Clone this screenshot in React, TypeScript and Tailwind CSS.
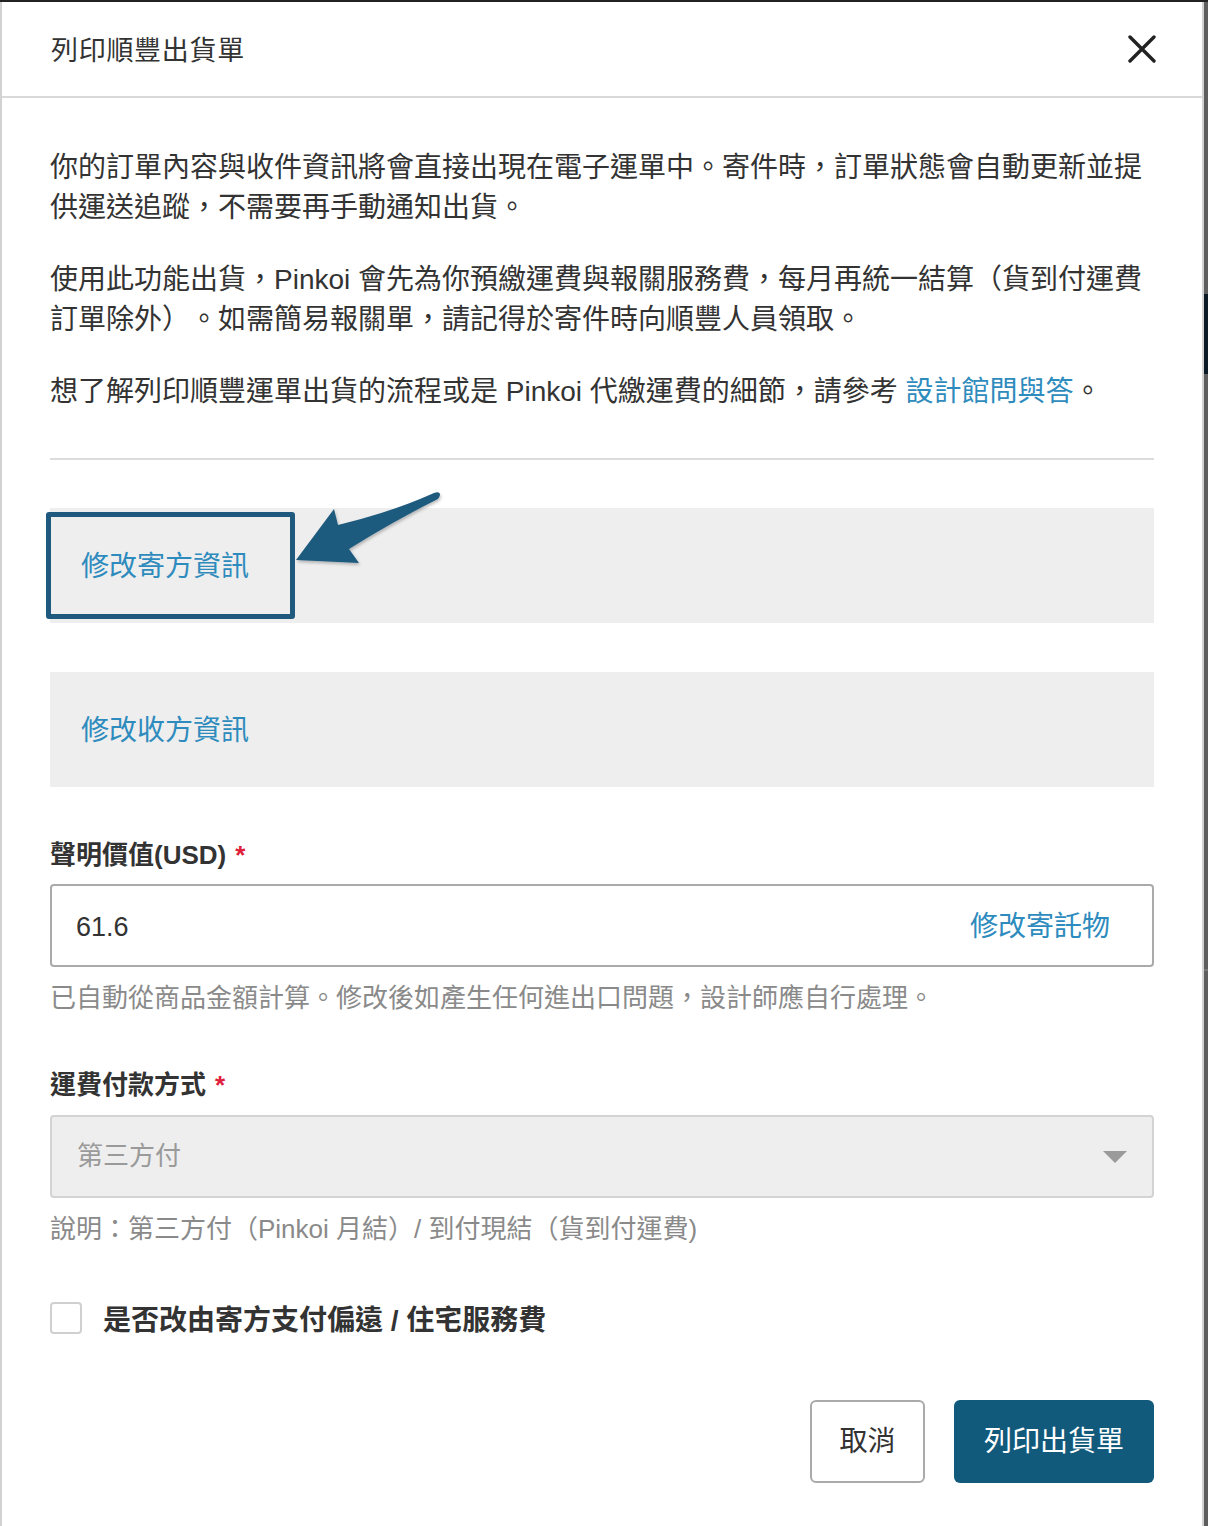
import React from "react";

const FONT = '"Liberation Sans", "Noto Sans CJK TC", sans-serif';

function CloseIcon() {
  return (
    <svg width="28" height="28" viewBox="0 0 28 28" fill="none">
      <path d="M2 2 L26 26 M26 2 L2 26" stroke="#222" strokeWidth="3.4" strokeLinecap="round" />
    </svg>
  );
}

function Arrow() {
  return (
    <svg
      className="absolute pointer-events-none"
      style={{ left: 0, top: 0 }}
      width="1208"
      height="700"
      viewBox="0 0 1208 700"
    >
      <defs>
        <filter id="sh" x="-20%" y="-20%" width="140%" height="140%">
          <feDropShadow dx="1" dy="2" stdDeviation="1.5" floodColor="#000" floodOpacity="0.25" />
        </filter>
      </defs>
      <path
        d="M296,560 L334,509 L338,525 Q392,512 434,493 Q440,491 440,495 Q439,499 436,500 Q392,522 349,549 L359,563 Z"
        fill="#1f5a7e"
        filter="url(#sh)"
      />
    </svg>
  );
}

export default function App() {
  return (
    <div
      className="relative w-[1208px] h-[1526px] bg-[#222] flex overflow-hidden [text-spacing-trim:space-all]"
      style={{ fontFamily: FONT }}
    >
      <div className="mt-[2px] w-[1204px] h-[1524px] bg-white border-l-2 border-r-2 border-[#d2d2d2] flex flex-col">
        {/* Header */}
        <div className="h-[96px] shrink-0 flex items-center justify-between pl-[49px] pr-[46px] border-b-2 border-[#d9d9d9]">
          <div className="mt-[4px] text-[27px] text-[#333] leading-none tracking-[0.7px]">列印順豐出貨單</div>
          <CloseIcon />
        </div>

        {/* Body */}
        <div className="px-[48px] pt-[50px] flex flex-col text-[#333]">
          <div className="text-[28px] leading-[40px]">
            <div className="whitespace-nowrap">你的訂單內容與收件資訊將會直接出現在電子運單中。寄件時，訂單狀態會自動更新並提</div>
            <div className="whitespace-nowrap">供運送追蹤，不需要再手動通知出貨。</div>
          </div>
          <div className="mt-[32px] text-[28px] leading-[40px]">
            <div className="whitespace-nowrap">使用此功能出貨，Pinkoi 會先為你預繳運費與報關服務費，每月再統一結算（貨到付運費</div>
            <div className="whitespace-nowrap">訂單除外）。如需簡易報關單，請記得於寄件時向順豐人員領取。</div>
          </div>
          <div className="mt-[32px] text-[28px] leading-[40px] whitespace-nowrap">
            想了解列印順豐運單出貨的流程或是 Pinkoi 代繳運費的細節，請參考 <span className="text-[#2e8bbd]">設計館問與答</span>。
          </div>

          <div className="mt-[46px] h-[2px] bg-[#dcdcdc]" />

          {/* Gray boxes */}
          <div className="mt-[48px] relative h-[115px] bg-[#eeeeee] flex items-center pl-[31px] pt-[3px]">
            <span className="text-[28px] text-[#2e8bbd]">修改寄方資訊</span>
            <div className="absolute left-[-4px] top-[4px] w-[249px] h-[107px] border-[5px] border-[#1f5a7e] rounded-[3px]" />
          </div>
          <div className="mt-[49px] h-[115px] bg-[#eeeeee] flex items-center pl-[31px] pt-[3px]">
            <span className="text-[28px] text-[#2e8bbd]">修改收方資訊</span>
          </div>

          {/* Declared value */}
          <div className="mt-[53px] h-[30px] flex items-center text-[26px] font-bold text-[#333]">
            聲明價值(USD)<span className="ml-[9px] text-[#e0203a]">*</span>
          </div>
          <div className="mt-[14px] h-[83px] border-2 border-[#aaaaaa] rounded-[4px] flex items-center justify-between pl-[24px] pr-[42px] pt-[3px]">
            <span className="text-[27px] text-[#333]">61.6</span>
            <span className="text-[28px] text-[#2e8bbd]">修改寄託物</span>
          </div>
          <div className="mt-[16px] h-[30px] flex items-center text-[26px] text-[#8a8a8a] whitespace-nowrap">
            已自動從商品金額計算。修改後如產生任何進出口問題，設計師應自行處理。
          </div>

          {/* Payment */}
          <div className="mt-[57px] h-[30px] flex items-center text-[26px] font-bold text-[#333]">
            運費付款方式<span className="ml-[9px] text-[#e0203a]">*</span>
          </div>
          <div className="mt-[15px] h-[83px] bg-[#eeeeee] border-2 border-[#d3d3d3] rounded-[4px] flex items-center justify-between pl-[25px] pr-[25px]">
            <span className="text-[26px] text-[#9a9a9a]">第三方付</span>
            <svg width="24" height="12" viewBox="0 0 24 12">
              <path d="M0 0 L24 0 L12 12 Z" fill="#9a9a9a" />
            </svg>
          </div>
          <div className="mt-[16px] h-[30px] flex items-center text-[26px] text-[#8a8a8a] whitespace-nowrap">
            說明：第三方付（Pinkoi 月結）/ 到付現結（貨到付運費)
          </div>

          {/* Checkbox */}
          <div className="mt-[54px] h-[40px] flex items-center">
            <div className="w-[32px] h-[32px] border-2 border-[#d0d0d0] rounded-[4px] bg-white" />
            <span className="ml-[21px] mt-[6px] text-[28px] leading-none font-bold text-[#333]">是否改由寄方支付偏遠 / 住宅服務費</span>
          </div>

          {/* Buttons */}
          <div className="mt-[62px] flex justify-end gap-[29px]">
            <button className="w-[115px] h-[83px] border-2 border-[#aaaaaa] rounded-[6px] bg-white text-[28px] text-[#333]">
              取消
            </button>
            <button className="w-[200px] h-[83px] rounded-[6px] bg-[#125a7c] text-[28px] text-white">
              列印出貨單
            </button>
          </div>
        </div>
      </div>
      <div className="mt-[2px] w-[4px] h-[1524px] flex flex-col">
        <div className="h-[292px] bg-[#5e5e5e]" />
        <div className="h-[80px] bg-[#0c1a25]" />
        <div className="h-[595px] bg-[#5e5e5e]" />
        <div className="h-[2px] bg-[#777]" />
        <div className="flex-1 bg-[#5e5e5e]" />
      </div>
      <Arrow />
    </div>
  );
}
